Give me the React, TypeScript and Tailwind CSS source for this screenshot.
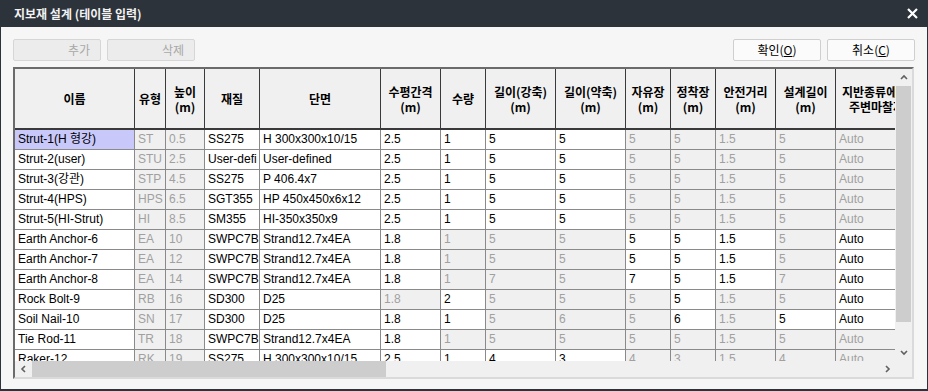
import React from "react"

type Col = { label: string[]; w: string }

const cols: Col[] = [
  { label: ["이름"], w: "w-[120px]" },
  { label: ["유형"], w: "w-[31px]" },
  { label: ["높이", "(m)"], w: "w-[39px]" },
  { label: ["재질"], w: "w-[55px]" },
  { label: ["단면"], w: "w-[121px]" },
  { label: ["수평간격", "(m)"], w: "w-[60px]" },
  { label: ["수량"], w: "w-[45px]" },
  { label: ["길이(강축)", "(m)"], w: "w-[70px]" },
  { label: ["길이(약축)", "(m)"], w: "w-[70px]" },
  { label: ["자유장", "(m)"], w: "w-[45px]" },
  { label: ["정착장", "(m)"], w: "w-[45px]" },
  { label: ["안전거리", "(m)"], w: "w-[60px]" },
  { label: ["설계길이", "(m)"], w: "w-[60px]" },
  { label: ["지반종류에 따른", "주변마찰저항"], w: "w-[93px]" },
]

// s = selected, g = read-only (grey), w = editable
const strutMask = "sggwwwwwwggggg"
const rows: { v: string[]; m: string }[] = [
  { v: ["Strut-1(H 형강)", "ST", "0.5", "SS275", "H 300x300x10/15", "2.5", "1", "5", "5", "5", "5", "1.5", "5", "Auto"], m: strutMask },
  { v: ["Strut-2(user)", "STU", "2.5", "User-defi", "User-defined", "2.5", "1", "5", "5", "5", "5", "1.5", "5", "Auto"], m: "wggwwwwwwggggg" },
  { v: ["Strut-3(강관)", "STP", "4.5", "SS275", "P 406.4x7", "2.5", "1", "5", "5", "5", "5", "1.5", "5", "Auto"], m: "wggwwwwwwggggg" },
  { v: ["Strut-4(HPS)", "HPS", "6.5", "SGT355", "HP 450x450x6x12", "2.5", "1", "5", "5", "5", "5", "1.5", "5", "Auto"], m: "wggwwwwwwggggg" },
  { v: ["Strut-5(HI-Strut)", "HI", "8.5", "SM355", "HI-350x350x9", "2.5", "1", "5", "5", "5", "5", "1.5", "5", "Auto"], m: "wggwwwwwwggggg" },
  { v: ["Earth Anchor-6", "EA", "10", "SWPC7B", "Strand12.7x4EA", "1.8", "1", "5", "5", "5", "5", "1.5", "5", "Auto"], m: "wggwwwgggwwwgw" },
  { v: ["Earth Anchor-7", "EA", "12", "SWPC7B", "Strand12.7x4EA", "1.8", "1", "5", "5", "5", "5", "1.5", "5", "Auto"], m: "wggwwwgggwwwgw" },
  { v: ["Earth Anchor-8", "EA", "14", "SWPC7B", "Strand12.7x4EA", "1.8", "1", "7", "5", "7", "5", "1.5", "7", "Auto"], m: "wggwwwgggwwwgw" },
  { v: ["Rock Bolt-9", "RB", "16", "SD300", "D25", "1.8", "2", "5", "5", "5", "5", "1.5", "5", "Auto"], m: "wggwwgwgggwggw" },
  { v: ["Soil Nail-10", "SN", "17", "SD300", "D25", "1.8", "1", "5", "6", "5", "6", "1.5", "5", "Auto"], m: "wggwwwwgggwgww" },
  { v: ["Tie Rod-11", "TR", "18", "SWPC7B", "Strand12.7x4EA", "1.8", "1", "5", "5", "5", "5", "1.5", "5", "Auto"], m: "wggwwwgggggggg" },
  { v: ["Raker-12", "RK", "19", "SS275", "H 300x300x10/15", "2.5", "1", "4", "3", "4", "3", "1.5", "4", "Auto"], m: "wggwwwwwwggggg" },
]

const cellTone: Record<string, string> = {
  s: "bg-[#c8c8fa] text-black",
  g: "bg-[#f0f0f0] text-[#a0a0a0]",
  w: "bg-white text-black",
}

function Chevron({ dir }: { dir: "up" | "down" | "left" | "right" }) {
  const pts = {
    up: "1,5 4,2 7,5",
    down: "1,2 4,5 7,2",
    left: "5,1 2,4 5,7",
    right: "3,1 6,4 3,7",
  }[dir]
  return (
    <svg width="8" height="8" viewBox="0 0 8 8">
      <polyline points={pts} fill="none" stroke="#606060" strokeWidth="1.6" />
    </svg>
  )
}

function DialogButton({ children, disabled }: { children: React.ReactNode; disabled?: boolean }) {
  if (disabled) {
    return (
      <div className="w-[88px] h-[22px] flex items-center justify-end pr-[10px] rounded-[2px] border border-[#d6d6d6] bg-[#ececec] text-[#a8a8a8]">
        {children}
      </div>
    )
  }
  return (
    <div className="w-[88px] h-[22px] flex items-center justify-center rounded-[2px] border border-[#cfcfcf] bg-[#fbfbfb] text-black">
      {children}
    </div>
  )
}

export default function App() {
  return (
    <div className="w-[928px] h-[391px] flex flex-col text-[12px] font-['Liberation_Sans','Noto_Sans_CJK_KR',sans-serif]">
      <div className="h-[27px] shrink-0 flex items-center justify-between bg-[#2d333a] pl-[14px] pr-[10px]">
        <span className="text-[12px] font-bold text-[#f2f2f2] font-['Noto_Sans_CJK_KR',sans-serif]">
          지보재 설계 (테이블 입력)
        </span>
        <svg width="11" height="11" viewBox="0 0 11 11" className="mr-[0px]">
          <path d="M1 1 L10 10 M10 1 L1 10" stroke="#ffffff" strokeWidth="2.2" />
        </svg>
      </div>

      <div className="flex-1 flex flex-col bg-[#f6f6f6] border-x border-b-2 border-[#2d333a] px-[12px] pt-[12px]">
        <div className="flex items-center justify-between h-[22px] font-['Noto_Sans_CJK_KR',sans-serif]">
          <div className="flex gap-[6px]">
            <DialogButton disabled>추가</DialogButton>
            <DialogButton disabled>삭제</DialogButton>
          </div>
          <div className="flex gap-[6px]">
            <DialogButton>
              확인(<span className="underline">O</span>)
            </DialogButton>
            <DialogButton>
              취소(<span className="underline">C</span>)
            </DialogButton>
          </div>
        </div>

        <div className="mt-[6px] w-[901px] h-[312px] flex flex-col border-2 border-t-[#6b6b6b] border-l-[#6b6b6b] border-r-[#dadada] border-b-[#dadada]">
          <div className="flex h-[292px]">
            <div className="w-[880px] overflow-hidden bg-white">
              <div className="flex h-[61px] border-b-2 border-[#3a3a3a] w-max">
                {cols.map((c, i) => (
                  <div
                    key={i}
                    className={`${c.w} shrink-0 flex flex-col items-center justify-center border-r border-[#3a3a3a] bg-[#f0f0f0] font-bold leading-[15px] whitespace-nowrap overflow-hidden font-['Noto_Sans_CJK_KR',sans-serif]`}
                  >
                    {c.label.map((l) => (
                      <span key={l}>{l}</span>
                    ))}
                  </div>
                ))}
              </div>
              {rows.map((r, ri) => (
                <div key={ri} className="flex h-[20px] w-max">
                  {r.v.map((v, i) => (
                    <div
                      key={i}
                      className={`${cols[i].w} ${cellTone[r.m[i]]} shrink-0 border-r border-b border-[#8a8a8a] pl-[3px] leading-[19px] whitespace-nowrap overflow-hidden`}
                    >
                      {v}
                    </div>
                  ))}
                </div>
              ))}
            </div>
            <div className="w-[17px] flex flex-col bg-[#f0f0f0]">
              <div className="h-[17px] flex items-center justify-center">
                <Chevron dir="up" />
              </div>
              <div className="h-[236px] mx-[1px] bg-[#cdcdcd]" />
              <div className="flex-1" />
              <div className="h-[17px] flex items-center justify-center">
                <Chevron dir="down" />
              </div>
            </div>
          </div>
          <div className="flex h-[16px]">
            <div className="w-[880px] flex bg-[#f0f0f0]">
              <div className="w-[17px] flex items-center justify-center">
                <Chevron dir="left" />
              </div>
              <div className="w-[354px] bg-[#cdcdcd]" />
              <div className="flex-1" />
              <div className="w-[17px] flex items-center justify-center">
                <Chevron dir="right" />
              </div>
            </div>
            <div className="w-[17px] bg-[#f0f0f0]" />
          </div>
        </div>
      </div>
    </div>
  )
}
